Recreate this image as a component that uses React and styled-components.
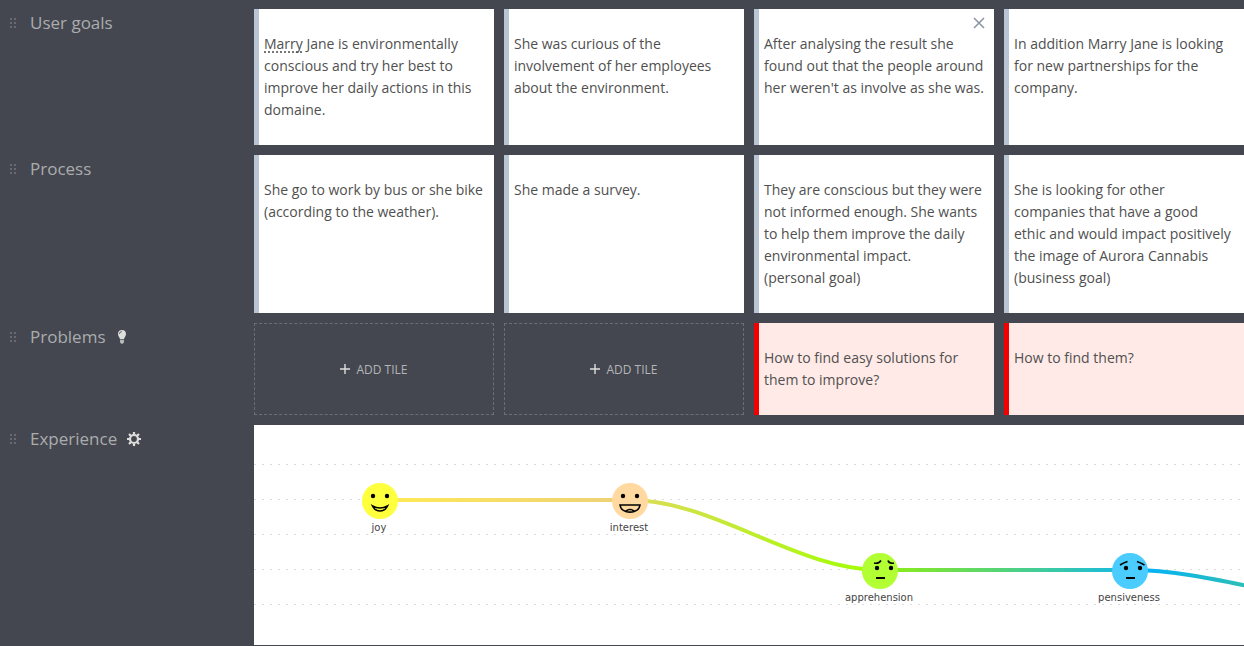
import React from 'react';
import styled, { createGlobalStyle } from 'styled-components';

const GlobalStyle = createGlobalStyle`
  * { box-sizing: border-box; }
  body {
    margin: 0;
    background: #44474f;
    color: #505050;
    font-family: "Open Sans", "Liberation Sans", sans-serif;
    overflow-x: hidden;
  }
`;

const Board = styled.main`
  display: flex;
  flex-direction: column;
  gap: 10px;
  padding: 9px 0 1px;
`;

const Lane = styled.section`
  display: grid;
  grid-template-columns: 244px minmax(0, 1fr);
  column-gap: 10px;
`;

const LaneHeader = styled.header`
  display: flex;
  align-items: center;
  align-self: start;
  height: 28px;
  padding-left: 10px;
  color: #abacae;
`;

const DragHandle = styled.button`
  width: 20px;
  height: 12px;
  padding: 0;
  border: 0;
  background: none;
  color: #666a73;
  cursor: grab;
  svg { display: block; }
`;

const LaneTitle = styled.h2`
  margin: 0;
  font-size: 17px;
  font-weight: 400;
  line-height: 28px;
`;

const IconButton = styled.button`
  display: flex;
  margin: 0 0 0 10px;
  padding: 0;
  border: 0;
  background: none;
  color: #dededc;
  cursor: pointer;
`;

const Tiles = styled.div`
  display: grid;
  grid-template-columns: repeat(4, 240px);
  gap: 10px;
`;

const Tile = styled.article`
  position: relative;
  padding: 24px 0 24px 5px;
  border-left: 5px solid ${(p) => (p.$problem ? '#f20000' : '#bac5d3')};
  background: ${(p) => (p.$problem ? '#ffeae7' : '#fff')};
`;

const TileText = styled.p`
  margin: 0;
  font-size: 14px;
  line-height: 22px;
`;

const Line = styled.span`
  display: block;
  white-space: pre;
`;

const Misspelled = styled.span`
  text-decoration: underline dotted #777 2px;
  text-decoration-skip-ink: none;
  text-underline-offset: 2px;
`;

const CloseButton = styled.button`
  position: absolute;
  top: 8px;
  right: 9px;
  padding: 0;
  border: 0;
  background: none;
  color: #8a93a1;
  cursor: pointer;
  svg { display: block; }
`;

const AddTile = styled.button`
  display: flex;
  align-items: center;
  justify-content: center;
  gap: 6px;
  min-height: 92px;
  padding: 0;
  border: 1px dashed #6a6e7b;
  background: none;
  color: #b4b5b8;
  font: 400 12px "Open Sans", "Liberation Sans", sans-serif;
  cursor: pointer;
`;

const ChartPanel = styled.div`
  overflow: hidden;
  background: #fff;
  svg { display: block; }
`;

const MoodLabel = styled.text`
  fill: #444;
  font-family: "DejaVu Sans", sans-serif;
  font-size: 10px;
  text-anchor: middle;
`;

const Dots = () => (
  <svg width="6" height="10" fill="currentColor" aria-hidden="true">
    {[0, 4, 8].map((y) => (
      <React.Fragment key={y}>
        <rect x="0" y={y} width="2" height="2" />
        <rect x="4" y={y} width="2" height="2" />
      </React.Fragment>
    ))}
  </svg>
);

const Bulb = () => (
  <svg width="14" height="14" viewBox="0 0 14 14" aria-hidden="true">
    <path fill="currentColor" d="M7 0C4.500 0 3 1.700 3 3.900c0 2.300 1.700 3.200 1.900 5.100h4.200c.2-1.900 1.900-2.800 1.900-5.100C11 1.700 9.500 0 7 0z" />
    <path fill="#44474f" d="M4.200 3.900C4.300 2.300 5.300 1.400 6.800 1.300v.7C5.700 2.100 5 2.800 4.900 3.900z" />
    <path fill="currentColor" d="M5 9.700h4v2.300l-1 1.500H6L5 12z" />
    <path stroke="#8b8d90" strokeWidth=".7" d="M5 10.800h4M5 12h4" />
  </svg>
);

const Gear = () => (
  <svg width="14" height="14" viewBox="0 0 14 14" fill="none" stroke="currentColor" aria-hidden="true">
    <circle cx="7" cy="7" r="4" strokeWidth="2.200" />
    <path strokeWidth="2.200" d="M7 0v2.500M7 11.500V14M0 7h2.500M11.500 7H14M2 2l1.800 1.800M10.200 10.200L12 12M12 2l-1.800 1.800M3.800 10.200L2 12" />
  </svg>
);

const Cross = () => (
  <svg width="12" height="12" viewBox="0 0 12 12" aria-hidden="true">
    <path stroke="currentColor" strokeWidth="1.500" d="M1 1l10 10M11 1L1 11" />
  </svg>
);

const Plus = () => (
  <svg width="10" height="10" viewBox="0 0 10 10" aria-hidden="true">
    <path stroke="#dededc" strokeWidth="1.400" d="M5 0v10M0 5h10" />
  </svg>
);

const lanes = [
  {
    title: 'User goals',
    tiles: [
      { flagged: 'Marry', text: ' Jane is environmentally\nconscious and try her best to\nimprove her daily actions in this\ndomaine.' },
      { text: 'She was curious of the\ninvolvement of her employees\nabout the environment.' },
      { text: "After analysing the result she\nfound out that the people around\nher weren't as involve as she was.", closable: true },
      { text: 'In addition Marry Jane is looking\nfor new partnerships for the\ncompany.' },
    ],
  },
  {
    title: 'Process',
    tiles: [
      { text: 'She go to work by bus or she bike\n(according to the weather).' },
      { text: 'She made a survey.' },
      { text: 'They are conscious but they were\nnot informed enough. She wants\nto help them improve the daily\nenvironmental impact.\n(personal goal)' },
      { text: 'She is looking for other\ncompanies that have a good\nethic and would impact positively\nthe image of Aurora Cannabis\n(business goal)' },
    ],
  },
  {
    title: 'Problems',
    action: { label: 'Insights', icon: <Bulb /> },
    problem: true,
    tiles: [
      null,
      null,
      { text: 'How to find easy solutions for\nthem to improve?' },
      { text: 'How to find them?' },
    ],
  },
];

const moods = [
  {
    name: 'joy', x: 126, y: 76, color: '#feff3d',
    face: (
      <>
        <circle cx="-7" cy="-5" r="2.200" /><circle cx="7" cy="-5" r="2.200" />
        <path fill="none" stroke="#000" strokeWidth="1.600" d="M-7.500 5Q0 9 7.500 5Q5 10 0 10Q-5 10 -7.500 5z" />
      </>
    ),
  },
  {
    name: 'interest', x: 376, y: 76, color: '#ffd9a0',
    face: (
      <>
        <circle cx="-7" cy="-5" r="2.200" /><circle cx="7" cy="-5" r="2.200" />
        <path fill="none" stroke="#000" strokeWidth="1.600" d="M-10 4H10C9 13.500-9 13.500-10 4zM-4 10Q0 7 4 10" />
      </>
    ),
  },
  {
    name: 'apprehension', x: 626, y: 146, color: '#b2ff33',
    face: (
      <>
        <circle cx="-3" cy="-3" r="2.200" /><circle cx="11" cy="-3" r="2.200" />
        <path fill="none" stroke="#000" strokeWidth="1.600" d="M-6 -8Q-1 -7 1 -10.500M8 -10.500Q9 -7 14 -8" />
        <rect x="-4" y="6" width="9" height="2" />
      </>
    ),
  },
  {
    name: 'pensiveness', x: 876, y: 146, color: '#4accff',
    face: (
      <>
        <circle cx="-4" cy="-3" r="2.200" /><circle cx="10" cy="-3" r="2.200" />
        <path fill="none" stroke="#000" strokeWidth="1.600" d="M-10 -6Q-7 -8 -2.500 -9.500M7 -9.500Q11 -8 14.500 -6" />
        <rect x="-4" y="6" width="9" height="2" />
      </>
    ),
  },
];

const segments = [
  { id: 'seg1', x1: 126, x2: 376, from: '#ffea55', to: '#ecd078', d: 'M126 75H376' },
  { id: 'seg2', x1: 376, x2: 626, from: '#dcdc58', to: '#9fff00', d: 'M376 75C459 75 543 145 626 145' },
  { id: 'seg3', x1: 626, x2: 876, from: '#90ee10', to: '#14b8e8', d: 'M626 145H876' },
  { id: 'seg4', x1: 876, x2: 1126, from: '#00b0ff', to: '#5cd060', d: 'M876 145C959 145 1043 180 1126 180' },
];

const ExperienceChart = () => (
  <ChartPanel>
    <svg width="100%" height="220" role="img" aria-label="Experience curve">
      <defs>
        {segments.map((s) => (
          <linearGradient key={s.id} id={s.id} gradientUnits="userSpaceOnUse" x1={s.x1} x2={s.x2} y1="0" y2="0">
            <stop stopColor={s.from} />
            <stop offset="1" stopColor={s.to} />
          </linearGradient>
        ))}
      </defs>
      {[39.5, 74.5, 109.5, 144.5, 179.5].map((y) => (
        <line key={y} x1="0" x2="100%" y1={y} y2={y} stroke="#dcdcdc" strokeDasharray="2 6" />
      ))}
      {segments.map((s) => (
        <path key={s.id} d={s.d} fill="none" stroke={`url(#${s.id})`} strokeWidth="4" />
      ))}
      {moods.map((m) => (
        <g key={m.name} transform={`translate(${m.x} ${m.y})`}>
          <circle r="18" fill={m.color} />
          {m.face}
          <MoodLabel x="-1" y="30">{m.name}</MoodLabel>
        </g>
      ))}
    </svg>
  </ChartPanel>
);

const LaneHead = ({ title, action }) => (
  <LaneHeader>
    <DragHandle aria-label={`Move ${title}`}><Dots /></DragHandle>
    <LaneTitle>{title}</LaneTitle>
    {action && <IconButton aria-label={action.label}>{action.icon}</IconButton>}
  </LaneHeader>
);

export default function App() {
  return (
    <>
      <GlobalStyle />
      <Board>
        {lanes.map((lane) => (
          <Lane key={lane.title}>
            <LaneHead title={lane.title} action={lane.action} />
            <Tiles>
              {lane.tiles.map((tile, i) =>
                tile ? (
                  <Tile key={i} $problem={lane.problem}>
                    <TileText>
                      {tile.text.split('\n').map((line, n) => (
                        <Line key={n}>
                          {n === 0 && tile.flagged && <Misspelled>{tile.flagged}</Misspelled>}
                          {line}
                        </Line>
                      ))}
                    </TileText>
                    {tile.closable && <CloseButton aria-label="Remove tile"><Cross /></CloseButton>}
                  </Tile>
                ) : (
                  <AddTile key={i}><Plus />ADD TILE</AddTile>
                )
              )}
            </Tiles>
          </Lane>
        ))}
        <Lane>
          <LaneHead title="Experience" action={{ label: 'Settings', icon: <Gear /> }} />
          <ExperienceChart />
        </Lane>
      </Board>
    </>
  );
}
